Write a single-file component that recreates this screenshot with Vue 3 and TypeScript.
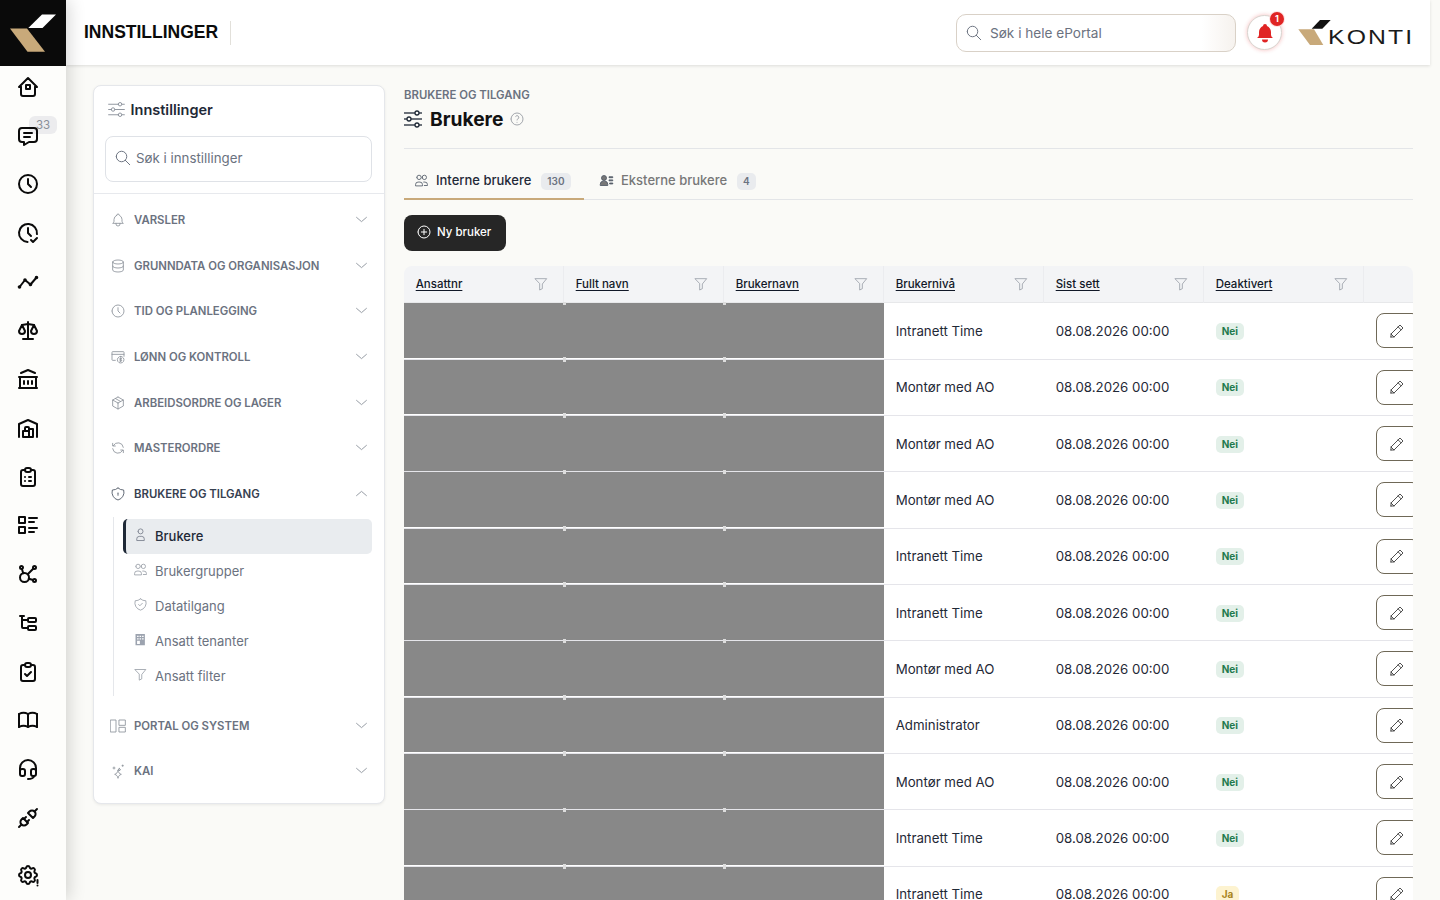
<script setup lang="ts">
const circle = (cx: number, cy: number, r: number): string =>
  `M${cx - r} ${cy}a${r} ${r} 0 1 0 ${2 * r} 0a${r} ${r} 0 1 0 ${-2 * r} 0`
const gear =
  'M10.325 4.317c.426-1.756 2.924-1.756 3.35 0a1.724 1.724 0 0 0 2.573 1.066c1.543-.94 3.31.826 2.37 2.37a1.724 1.724 0 0 0 1.065 2.572c1.756.426 1.756 2.924 0 3.35a1.724 1.724 0 0 0-1.066 2.573c.94 1.543-.826 3.31-2.37 2.37a1.724 1.724 0 0 0-2.572 1.065c-.426 1.756-2.924 1.756-3.35 0a1.724 1.724 0 0 0-2.573-1.066c-1.543.94-3.31-.826-2.37-2.37a1.724 1.724 0 0 0-1.065-2.572c-1.756-.426-1.756-2.924 0-3.35a1.724 1.724 0 0 0 1.066-2.573c-.94-1.543.826-3.31 2.37-2.37c1 .608 2.296.07 2.572-1.065z'
const clipboard =
  'M9 5H7a2 2 0 0 0-2 2v12a2 2 0 0 0 2 2h10a2 2 0 0 0 2-2V7a2 2 0 0 0-2-2h-2M9 5a2 2 0 0 1 2-2h2a2 2 0 0 1 2 2a2 2 0 0 1-2 2h-2a2 2 0 0 1-2-2z'

const icons: Record<string, string[]> = {
  home: ['M5 12H3l9-9 9 9h-2', 'M5 12v7a2 2 0 0 0 2 2h10a2 2 0 0 0 2-2v-7', 'M10 10h4v4h-4z'],
  message: ['M8 9h8', 'M8 13h6', 'M18 4a3 3 0 0 1 3 3v8a3 3 0 0 1-3 3h-5l-5 3v-3H6a3 3 0 0 1-3-3V7a3 3 0 0 1 3-3h12z'],
  clock: [circle(12, 12, 9), 'M12 7v5l3 3'],
  clockCheck: ['M20.942 13.021a9 9 0 1 0-9.407 7.967', 'M12 7v5l3 3', 'M15 19l2 2 4-4'],
  timeline: ['M3.5 17L9 10l5.500 4.500 6-7', circle(3.5, 17, 0.8), circle(9, 10, 0.8), circle(14.5, 14.5, 0.8), circle(20.5, 7.5, 0.8)],
  scale: ['M7 20h10', 'M6 6l6-1 6 1', 'M12 3v17', 'M9 12l-3-6-3 6a3 3 0 0 0 6 0', 'M21 12l-3-6-3 6a3 3 0 0 0 6 0'],
  bank: ['M3 21h18', 'M3 10h18', 'M5 6l7-3 7 3', 'M4 10v11', 'M20 10v11', 'M8 14v3', 'M12 14v3', 'M16 14v3'],
  warehouse: ['M3 21V8l9-4 9 4v13', 'M13 13h4v8H7v-6h6', 'M13 21v-9a1 1 0 0 0-1-1h-2a1 1 0 0 0-1 1v3'],
  clipList: [clipboard, 'M9 12h.01', 'M13 12h2', 'M9 16h.01', 'M13 16h2'],
  listDetails: ['M13 5h8', 'M13 9h5', 'M13 15h8', 'M13 19h5', 'M3 4h6v6H3z', 'M3 14h6v6H3z'],
  affiliate: ['M5.931 6.936l1.275 4.249', 'M12.813 16.794l4.251 1.275', 'M11.683 12.317l5.759-5.759', circle(5.5, 5.5, 1.5), circle(18.5, 5.5, 1.5), circle(18.5, 18.5, 1.5), circle(8.5, 15.5, 4.5)],
  subtask: ['M6 9h6', 'M4 5h4', 'M6 5v11a1 1 0 0 0 1 1h5', 'M13 7h6a1 1 0 0 1 1 1v2a1 1 0 0 1-1 1h-6a1 1 0 0 1-1-1V8a1 1 0 0 1 1-1z', 'M13 15h6a1 1 0 0 1 1 1v2a1 1 0 0 1-1 1h-6a1 1 0 0 1-1-1v-2a1 1 0 0 1 1-1z'],
  clipCheck: [clipboard, 'M9 14l2 2 4-4'],
  book: ['M3 19a9 9 0 0 1 9 0a9 9 0 0 1 9 0', 'M3 6a9 9 0 0 1 9 0a9 9 0 0 1 9 0', 'M3 6v13', 'M12 6v13', 'M21 6v13'],
  headset: ['M4 14v-3a8 8 0 1 1 16 0v3', 'M18 19c0 1.657-2.686 3-6 3', 'M4 14a2 2 0 0 1 2-2h1a2 2 0 0 1 2 2v3a2 2 0 0 1-2 2H6a2 2 0 0 1-2-2v-3z', 'M15 14a2 2 0 0 1 2-2h1a2 2 0 0 1 2 2v3a2 2 0 0 1-2 2h-1a2 2 0 0 1-2-2v-3z'],
  plug: ['M7 12l5 5-1.5 1.5a3.536 3.536 0 1 1-5-5L7 12z', 'M17 12l-5-5 1.5-1.5a3.536 3.536 0 1 1 5 5L17 12z', 'M3 21l2.5-2.5', 'M18.5 5.5L21 3', 'M10 11l-2 2', 'M13 14l-2 2'],
  settings: [gear, circle(12, 12, 3), 'M21.5 17v3', 'M21.5 22.5v.01'],
  bell: ['M10 5a2 2 0 1 1 4 0a7 7 0 0 1 4 6v3a4 4 0 0 0 2 3H4a4 4 0 0 0 2-3v-3a7 7 0 0 1 4-6', 'M9 17v1a3 3 0 0 0 6 0v-1'],
  database: ['M4 6c0-1.657 3.582-3 8-3s8 1.343 8 3-3.582 3-8 3-8-1.343-8-3', 'M4 6v6c0 1.657 3.582 3 8 3s8-1.343 8-3V6', 'M4 12v6c0 1.657 3.582 3 8 3s8-1.343 8-3v-6'],
  money: ['M8 17H4a1 1 0 0 1-1-1V5a1 1 0 0 1 1-1h16a1 1 0 0 1 1 1v6', 'M3 8h18', 'M16 11a5 5 0 1 0 .01 0', 'M17.5 14h-2a1 1 0 0 0 0 2h1a1 1 0 0 1 0 2h-2', 'M16 13v6'],
  box: ['M12 3l8 4.5v9L12 21l-8-4.5v-9L12 3', 'M12 12l8-4.5', 'M12 12v9', 'M12 12L4 7.5', 'M8 5.2l8 4.6'],
  refresh: ['M20 11A8 8 0 0 0 5 8.5', 'M4 5v4h4', 'M4 13a8 8 0 0 0 15 2.5', 'M20 19v-4h-4'],
  shieldLock: ['M12 3a12 12 0 0 0 8.5 3A12 12 0 0 1 12 21 12 12 0 0 1 3.5 6 12 12 0 0 0 12 3', 'M12 10.5v.01', 'M12 11v3'],
  layout: ['M1 3h8v18H1z', 'M14 3h9v8h-9z', 'M14 14h9v7h-9z'],
  sparkles: ['M14 8a2 2 0 0 0 2 2 2 2 0 0 0-2 2 2 2 0 0 0-2-2 2 2 0 0 0 2-2z', 'M12 11c.6 3.5 2 5 5 6-3 1-4.4 2.5-5 6-.6-3.5-2-5-5-6 3-1 4.4-2.5 5-6z', 'M6 6v3', 'M4.5 7.5h3', 'M19 3v2', 'M18 4h2'],
  sliders: ['M3 6h11', 'M18 6h3', circle(16, 6, 2), 'M3 12h3', 'M10 12h11', circle(8, 12, 2), 'M3 18h11', 'M18 18h3', circle(16, 18, 2)],
  search: [circle(10, 10, 7), 'M21 21l-6-6'],
  chevDown: ['M5 9l7 6 7-6'],
  chevUp: ['M5 15l7-6 7 6'],
  user: [circle(12, 7, 4), 'M6 21v-2a4 4 0 0 1 4-4h4a4 4 0 0 1 4 4v2z'],
  users: [circle(8, 7, 3.5), circle(16.5, 7, 3.5), 'M2.5 20v-1.500a4 4 0 0 1 4-4h3a4 4 0 0 1 4 4V20z', 'M15.500 14.500h2a4 4 0 0 1 4 4V20h-5'],
  shieldCheck: ['M12 3a12 12 0 0 0 8.500 3A12 12 0 0 1 12 21 12 12 0 0 1 3.500 6 12 12 0 0 0 12 3', 'M9 12l2 2 4-4'],
  filter: ['M3.500 4h17l-6.500 8v7l-4 2v-9z'],
  help: [circle(12, 12, 9), 'M12 17v.01', 'M12 13.500a1.500 1.500 0 0 1 1-1.500a2.600 2.600 0 1 0-3-4'],
  plus: [circle(12, 12, 9), 'M8 12h8', 'M12 8v8'],
  pencil: ['M4 20v-4L16 4l4 4L8 20H4z', 'M13.500 6.500l4 4', 'M4 16l4 4'],
}

const rail = ['home', 'message', 'clock', 'clockCheck', 'timeline', 'scale', 'bank', 'warehouse', 'clipList', 'listDetails', 'affiliate', 'subtask', 'clipCheck', 'book', 'headset', 'plug']

const sectionsTop = [
  { icon: 'bell', label: 'VARSLER' },
  { icon: 'database', label: 'GRUNNDATA OG ORGANISASJON' },
  { icon: 'clock', label: 'TID OG PLANLEGGING' },
  { icon: 'money', label: 'LØNN OG KONTROLL' },
  { icon: 'box', label: 'ARBEIDSORDRE OG LAGER' },
  { icon: 'refresh', label: 'MASTERORDRE' },
]
const sectionsBottom = [
  { icon: 'layout', label: 'PORTAL OG SYSTEM' },
  { icon: 'sparkles', label: 'KAI' },
]
const subItems = [
  { icon: 'user', label: 'Brukere', active: true },
  { icon: 'users', label: 'Brukergrupper', active: false },
  { icon: 'shieldCheck', label: 'Datatilgang', active: false },
  { icon: 'tenant', label: 'Ansatt tenanter', active: false },
  { icon: 'filter', label: 'Ansatt filter', active: false },
]
const columns = ['Ansattnr', 'Fullt navn', 'Brukernavn', 'Brukernivå', 'Sist sett', 'Deaktivert']
const rows = [
  ['Intranett Time', 'Nei'],
  ['Montør med AO', 'Nei'],
  ['Montør med AO', 'Nei'],
  ['Montør med AO', 'Nei'],
  ['Intranett Time', 'Nei'],
  ['Intranett Time', 'Nei'],
  ['Montør med AO', 'Nei'],
  ['Administrator', 'Nei'],
  ['Montør med AO', 'Nei'],
  ['Intranett Time', 'Nei'],
  ['Intranett Time', 'Ja'],
].map(([level, off]) => ({ level, off, seen: '08.08.2026 00:00' }))
</script>

<template>
  <div class="app">
    <aside class="rail">
      <div class="brand">
        <svg width="66" height="66" viewBox="0 0 66 66">
          <path d="M28.3 28L42 14.5h14L42.500 28z" fill="#fff" />
          <path d="M10 28.500h17L45 51.700H27.500z" fill="#c8a97a" />
        </svg>
      </div>
      <nav class="rail-nav">
        <a v-for="name in rail" :key="name" class="rail-link">
          <span v-if="name === 'message'" class="rail-badge">33</span>
          <svg class="rail-icon" viewBox="0 0 24 24"><path v-for="d in icons[name]" :key="d" :d="d" /></svg>
        </a>
      </nav>
      <a class="rail-link rail-last">
        <svg class="rail-icon" viewBox="0 0 24 24"><path v-for="d in icons.settings" :key="d" :d="d" /></svg>
      </a>
    </aside>

    <div class="right">
      <header class="topbar">
        <div class="page-name">INNSTILLINGER</div>
        <div class="top-tools">
          <div class="global-search">
            <svg class="thin search-ic" viewBox="0 0 24 24"><path v-for="d in icons.search" :key="d" :d="d" /></svg>
            <span>Søk i hele ePortal</span>
          </div>
          <div class="alarm">
            <svg width="24" height="24" viewBox="0 0 24 24" fill="#e02424">
              <path d="M10 5a2 2 0 1 1 4 0a7 7 0 0 1 4 6v3a4 4 0 0 0 2 3H4a4 4 0 0 0 2-3v-3a7 7 0 0 1 4-6z" />
              <path d="M9 18.500h6a3 3 0 0 1-6 0z" />
            </svg>
            <span class="alarm-count">1</span>
          </div>
          <div class="konti">
            <svg width="34" height="29" viewBox="0 0 34 29">
              <path d="M0.300 11.300H16L25.300 27H12z" fill="#c8a97a" />
              <path d="M13.700 10.700L22 2h10.700L24.300 10.700z" fill="#111" />
            </svg>
            <span class="konti-text">KONTI</span>
          </div>
        </div>
      </header>

      <div class="content">
        <section class="panel">
          <div class="panel-head">
            <svg class="thin head-ic" viewBox="0 0 24 24"><path v-for="d in icons.sliders" :key="d" :d="d" /></svg>
            <span>Innstillinger</span>
          </div>
          <div class="panel-search">
            <svg class="thin search-ic" viewBox="0 0 24 24"><path v-for="d in icons.search" :key="d" :d="d" /></svg>
            <span>Søk i innstillinger</span>
          </div>
          <div class="sections">
            <div v-for="s in sectionsTop" :key="s.label" class="section">
              <svg class="thin sec-ic" viewBox="0 0 24 24"><path v-for="d in icons[s.icon]" :key="d" :d="d" /></svg>
              <span class="section-label">{{ s.label }}</span>
              <svg class="thin chev" viewBox="0 0 24 24"><path :d="icons.chevDown[0]" /></svg>
            </div>
            <div class="section open">
              <svg class="thin sec-ic" viewBox="0 0 24 24"><path v-for="d in icons.shieldLock" :key="d" :d="d" /></svg>
              <span class="section-label">BRUKERE OG TILGANG</span>
              <svg class="thin chev" viewBox="0 0 24 24"><path :d="icons.chevUp[0]" /></svg>
            </div>
            <div class="sublist">
              <div v-for="i in subItems" :key="i.label" class="subitem" :class="{ active: i.active }">
                <svg v-if="i.icon === 'tenant'" class="sub-ic" viewBox="0 0 24 24" fill="#9ca3af">
                  <path d="M4 3h15v18H4zM6.500 6v2H9V6zM10.500 6v2H13V6zM14.500 6v2H17V6zM6.500 10v2H9v-2zM10.500 10v2H13v-2zM14.500 10v2H17v-2zM6.500 14v5H11v-5z" fill-rule="evenodd" />
                </svg>
                <svg v-else class="thin sub-ic" viewBox="0 0 24 24"><path v-for="d in icons[i.icon]" :key="d" :d="d" /></svg>
                <span>{{ i.label }}</span>
              </div>
            </div>
            <div v-for="s in sectionsBottom" :key="s.label" class="section">
              <svg class="thin sec-ic" viewBox="0 0 24 24"><path v-for="d in icons[s.icon]" :key="d" :d="d" /></svg>
              <span class="section-label">{{ s.label }}</span>
              <svg class="thin chev" viewBox="0 0 24 24"><path :d="icons.chevDown[0]" /></svg>
            </div>
          </div>
        </section>

        <main class="main">
          <div class="crumb">BRUKERE OG TILGANG</div>
          <div class="title-row">
            <svg class="title-ic" viewBox="0 0 24 24"><path v-for="d in icons.sliders" :key="d" :d="d" /></svg>
            <h1>Brukere</h1>
            <svg class="thin help-ic" viewBox="0 0 24 24"><path v-for="d in icons.help" :key="d" :d="d" /></svg>
          </div>
          <div class="tabs">
            <div class="tab tab-on">
              <svg class="thin tab-ic" viewBox="0 0 24 24"><path v-for="d in icons.users" :key="d" :d="d" /></svg>
              <span>Interne brukere</span>
              <em class="count">130</em>
            </div>
            <div class="tab">
              <svg class="tab-ic" viewBox="0 0 24 24" fill="#777">
                <path d="M8 4a4 4 0 1 1 0 8a4 4 0 0 1 0-8zM2 20v-2a5 5 0 0 1 5-5h2a5 5 0 0 1 5 5v2zM16 6h6v1.500h-6zM16 11h6v1.500h-6zM17 16h5v1.500h-5z" />
              </svg>
              <span>Eksterne brukere</span>
              <em class="count">4</em>
            </div>
          </div>
          <button class="new-btn" type="button">
            <svg class="btn-ic" viewBox="0 0 24 24"><path v-for="d in icons.plus" :key="d" :d="d" /></svg>
            Ny bruker
          </button>

          <div class="table">
            <div class="thead">
              <div v-for="c in columns" :key="c" class="th">
                <span class="th-text">{{ c }}</span>
                <svg class="thin filter-ic" viewBox="0 0 24 24"><path :d="icons.filter[0]" /></svg>
              </div>
              <div class="th th-end"></div>
            </div>
            <div v-for="(r, i) in rows" :key="i" class="tr">
              <div class="td mask"></div>
              <div class="td mask"></div>
              <div class="td mask"></div>
              <div class="td">{{ r.level }}</div>
              <div class="td">{{ r.seen }}</div>
              <div class="td"><span class="pill" :class="r.off === 'Ja' ? 'pill-yes' : 'pill-no'">{{ r.off }}</span></div>
              <div class="td td-end">
                <button class="edit" type="button">
                  <svg class="thin edit-ic" viewBox="0 0 24 24"><path v-for="d in icons.pencil" :key="d" :d="d" /></svg>
                </button>
              </div>
            </div>
          </div>
        </main>
      </div>
    </div>
  </div>
</template>

<style>
html, body { margin: 0; height: 100%; overflow: hidden; background: #fafaf7; }
</style>

<style scoped>
* { box-sizing: border-box; }
.app { display: flex; width: 1440px; height: 900px; overflow: hidden; background: #fafaf7; font-family: Inter, "Noto Sans", sans-serif; color: #111827; }
.thin { fill: none; stroke: #8e949d; stroke-width: 1.3; stroke-linecap: round; stroke-linejoin: round; flex: none; }

.rail { position: relative; z-index: 3; flex: none; width: 66px; height: 900px; display: flex; flex-direction: column; background: #fdfdfb; box-shadow: 3px 0 16px rgba(0, 0, 0, 0.16); }
.brand { height: 66px; background: #0a0a0a; flex: none; }
.brand svg { display: block; }
.rail-nav { display: flex; flex-direction: column; flex: none; margin-top: -3.400px; }
.rail-link { position: relative; display: flex; align-items: center; justify-content: center; height: 48.730px; width: 56px; flex: none; }
.rail-last { margin-top: auto; height: 50px; }
.rail-icon { position: relative; width: 24px; height: 24px; fill: none; stroke: #0b0b0b; stroke-width: 2; stroke-linecap: round; stroke-linejoin: round; }
.rail-badge { position: absolute; left: 29px; top: 4.500px; width: 28px; height: 18px; border-radius: 6px; background: #ececee; color: #8a8f98; font-size: 11.500px; line-height: 18px; text-align: center; }

.right { flex: none; width: 1364px; display: flex; flex-direction: column; height: 900px; }
.topbar { position: relative; z-index: 2; flex: none; height: 65px; display: flex; align-items: center; justify-content: space-between; padding: 0 17px 0 18px; background: #fff; box-shadow: 0 1px 3px rgba(0, 0, 0, 0.12); }
.page-name { font-family: "Liberation Sans", Arial, sans-serif; font-size: 17.500px; font-weight: 700; color: #0b0b0b; line-height: 22px; padding: 0 12px 2px 0; border-right: 1px solid #e2e0da; }
.top-tools { display: flex; align-items: center; }
.global-search { display: flex; align-items: center; width: 280px; height: 38px; padding: 0 8px; border: 1px solid #d9d1c7; border-radius: 10px; background: linear-gradient(90deg, #fff 88%, #f6f2ee); font-size: 13.600px; color: #6b7280; margin-top: 1px; }
.global-search span { margin-left: 7px; }
.search-ic { width: 18px; height: 18px; stroke: #6b7280; }
.alarm { position: relative; width: 35px; height: 35px; margin-left: 11px; border-radius: 50%; border: 1px solid #d8d5d0; background: #fff; display: flex; align-items: center; justify-content: center; box-shadow: 0 0 4px rgba(224, 36, 36, 0.3); }
.alarm-count { position: absolute; right: -3px; top: -4px; width: 14px; height: 14px; border-radius: 50%; background: #e02424; color: #fff; font-size: 9px; font-weight: 700; line-height: 14px; text-align: center; box-shadow: 0 0 0 1px #fde2e2; }
.konti { display: flex; align-items: flex-end; width: 115px; height: 29px; margin-left: 16px; position: relative; }
.konti svg { flex: none; }
.konti-text { position: absolute; left: 30px; top: 8px; font-family: "Liberation Sans", sans-serif; font-size: 21px; line-height: 21px; letter-spacing: 1.800px; color: #1a1a1a; transform: scaleX(1.180); transform-origin: left center; white-space: nowrap; }

.content { flex: 1; min-height: 0; display: flex; gap: 19px; padding: 20px 17px 0 27px; }
.panel { flex: none; width: 292px; height: 719px; background: #fff; border: 1px solid #e5e7eb; border-radius: 8px; box-shadow: 0 1px 3px rgba(0, 0, 0, 0.07); display: flex; flex-direction: column; }
.panel-head { display: flex; align-items: center; height: 50px; padding: 0 0 4px 11.500px; gap: 4px; font-size: 14.500px; font-weight: 600; color: #1f2937; flex: none; }
.head-ic { width: 21px; height: 21px; stroke-width: 1.100; }
.panel-search { display: flex; align-items: center; height: 46px; margin: 0 12px 0 11px; padding: 0 0 2px 8px; border: 1px solid #dfe2e7; border-radius: 8px; font-size: 13.300px; color: #6b7280; flex: none; }
.panel-search span { margin-left: 4px; }
.sections { margin-top: 11px; padding-top: 3.300px; border-top: 1px solid #e7e9ed; }
.section { display: flex; align-items: center; height: 45.670px; padding-left: 16px; padding-right: 14px; }
.sec-ic { width: 16px; height: 16px; stroke-width: 1.300; }
.section-label { margin-left: 8px; flex: 1; font-size: 11.360px; font-weight: 600; color: #6b7280; }
.open .section-label { color: #374151; }
.open .sec-ic { stroke: #4b5563; }
.chev { width: 17px; height: 17px; stroke-width: 1.300; margin-top: -1px; }
.sublist { margin-left: 19px; margin-right: 12px; padding: 2px 0 2px 9px; border-left: 1px solid #e5e7eb; margin-bottom: 7px; }
.subitem { display: flex; align-items: center; height: 35px; padding-left: 7px; border-left: 3px solid transparent; border-radius: 5px; font-size: 13px; color: #6b7280; }
.subitem.active { background: #e9ecef; border-left-color: #1f2937; color: #1f2937; font-weight: 500; }
.sub-ic { width: 15px; height: 15px; margin-right: 7px; flex: none; margin-top: -3px; stroke-width: 1.200; }
.subitem.active .sub-ic { stroke: #6b7280; }

.main { flex: 1; min-width: 0; display: flex; flex-direction: column; align-items: flex-start; }
.main > * { flex: none; }
.crumb { font-size: 11.360px; font-weight: 600; color: #6b7280; line-height: 20px; }
.title-row { display: flex; align-items: center; height: 28px; width: 100%; margin-bottom: 15px; }
.title-ic { width: 24px; height: 24px; fill: none; stroke: #1f2937; stroke-width: 1.300; margin: 0 5px 0 -3px; }
h1 { margin: 0; font-size: 19.200px; font-weight: 700; color: #111; line-height: 28px; }
.help-ic { width: 16px; height: 16px; margin-left: 6px; stroke: #8b9098; stroke-width: 1.200; }
.tabs { display: flex; width: 100%; height: 52px; border-top: 1px solid #e3e5e8; border-bottom: 1px solid #e3e5e8; padding-top: 12px; }
.tab { display: flex; align-items: center; height: 39px; width: 180px; padding: 1px 12px 0 10px; border-bottom: 2px solid transparent; font-size: 13px; font-weight: 500; color: #777; }
.tab + .tab { padding-left: 15px; width: auto; }
.tab-on { border-bottom-color: #c8a97a; color: #1f2937; }
.tab-ic { width: 15px; height: 15px; margin-right: 7px; flex: none; stroke: #4b5563; stroke-width: 1.300; }
.count { margin: 2px 0 0 10px; padding: 0 6px; height: 17px; border-radius: 5px; background: #e9ebee; color: #6b7280; font-size: 10px; font-weight: 600; font-style: normal; line-height: 17px; }
.new-btn { display: flex; align-items: center; width: 102px; height: 36px; margin-top: 15px; padding: 0 0 2px 12px; border: 0; border-radius: 8px; background: #262626; color: #fff; font-family: Inter, sans-serif; font-size: 11.500px; font-weight: 500; }
.btn-ic { width: 16px; height: 16px; margin-right: 5px; fill: none; stroke: #fff; stroke-width: 1.500; stroke-linecap: round; }

.table { width: 100%; margin-top: 15px; overflow: hidden; border-radius: 8px 8px 0 0; }
.thead { display: flex; height: 37.300px; background: #f3f4f6; }
.th { display: flex; align-items: center; justify-content: space-between; width: 160px; flex: none; padding: 0 14.500px 2px 11.700px; border-right: 1px solid #ebecef; box-shadow: inset 0 -1px 0 #e7e8ea; }
.th-end { flex: 1; width: auto; border-right: 0; }
.th-text { font-size: 11.500px; font-weight: 500; color: #111827; text-decoration: underline; text-underline-offset: 2px; }
.filter-ic { width: 16px; height: 16px; stroke-width: 1.100; }
.tr { display: flex; height: 56.330px; background: #fff; border-bottom: 1px solid #e5e5ea; }
.td { width: 160px; flex: none; display: flex; align-items: center; padding-left: 11.700px; font-size: 13.280px; color: #1f2937; }
.mask { position: relative; background: #888; height: calc(100% - 0.500px); }
.mask + .mask::before { content: ""; position: absolute; left: -1px; bottom: -2px; width: 3px; height: 3px; background: #ddd; }
.mask + .mask::after { content: ""; position: absolute; left: -1px; top: -1px; width: 3px; height: 3px; background: #ddd; }
.td-end { flex: 1; width: auto; padding-left: 12px; }
.pill { height: 17px; margin-top: 1px; border-radius: 5px; font-size: 10px; font-weight: 700; line-height: 17px; padding: 0 6px; }
.pill-no { background: #e3f0e9; color: #1f7a4d; }
.pill-yes { background: #fdf3d0; color: #a8841a; }
.edit { flex: none; width: 44px; height: 35px; display: flex; align-items: center; justify-content: flex-start; padding: 0 0 0 11px; border: 1px solid #6f6857; border-radius: 8px; background: #fff; }
.edit-ic { width: 18px; height: 18px; stroke: #444; stroke-width: 1.250; }
</style>
